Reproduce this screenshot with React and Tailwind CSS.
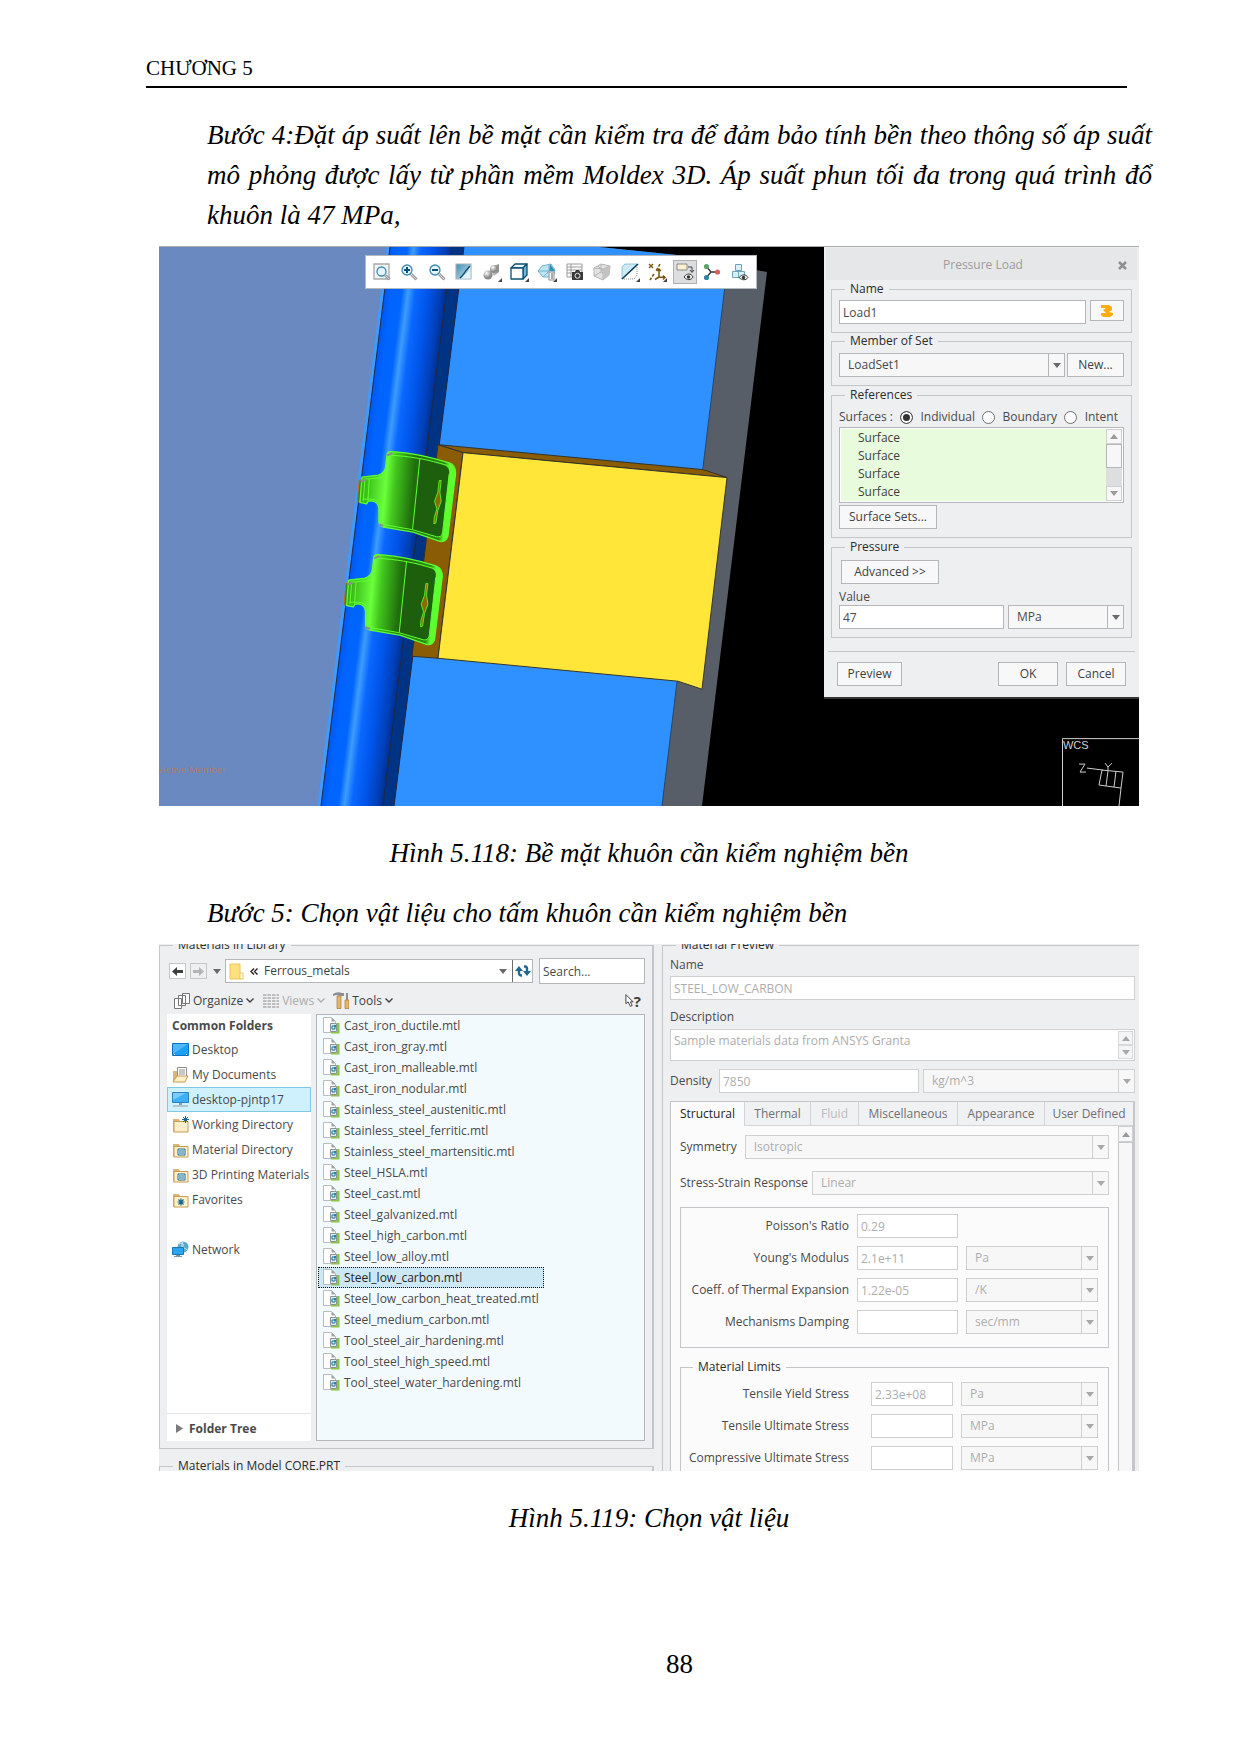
import { useId } from "react";
import clsx from "clsx";

const files = [
  "Cast_iron_ductile.mtl",
  "Cast_iron_gray.mtl",
  "Cast_iron_malleable.mtl",
  "Cast_iron_nodular.mtl",
  "Stainless_steel_austenitic.mtl",
  "Stainless_steel_ferritic.mtl",
  "Stainless_steel_martensitic.mtl",
  "Steel_HSLA.mtl",
  "Steel_cast.mtl",
  "Steel_galvanized.mtl",
  "Steel_high_carbon.mtl",
  "Steel_low_alloy.mtl",
  "Steel_low_carbon.mtl",
  "Steel_low_carbon_heat_treated.mtl",
  "Steel_medium_carbon.mtl",
  "Tool_steel_air_hardening.mtl",
  "Tool_steel_high_speed.mtl",
  "Tool_steel_water_hardening.mtl",
];

/* ---------- toolbar icons, all on an 18px grid ---------- */

function Magnifier({ cx = 7, cy = 7, r = 5 }) {
  return (
    <>
      <path d={`M${cx + 4} ${cy + 4}L16.5 16.5`} stroke="#9a9a9a" strokeWidth="3" />
      <path d={`M${cx + 4} ${cy + 4}L16 16`} stroke="#d8d8d8" strokeWidth="1" />
      <circle cx={cx} cy={cy} r={r} fill="#e4f4fb" stroke="#3d89ad" strokeWidth="1.3" />
    </>
  );
}

const toolIcons = [
  {
    name: "Refit",
    art: (
      <>
        <path d="M1 1h15v15H1z" fill="#f4f4f4" stroke="#a9a9a9" strokeWidth="1.3" />
        <Magnifier cx={8.5} cy={8.5} r={4.5} />
      </>
    ),
  },
  {
    name: "Zoom In",
    art: (
      <>
        <Magnifier />
        <path d="M7 4v6M4 7h6" stroke="#0d4f73" strokeWidth="2" />
      </>
    ),
  },
  {
    name: "Zoom Out",
    art: (
      <>
        <Magnifier />
        <path d="M4 7h6" stroke="#0d4f73" strokeWidth="2" />
      </>
    ),
  },
  {
    name: "Repaint",
    art: (
      <>
        <path d="M1 1h15v15H1z" fill="url(#repaint)" stroke="#a9b4b9" strokeWidth="1.2" />
        <path d="M15.500 2v13.500H5c2-1 3-2 3-4 3 1 6-4 7.500-9.500z" fill="#e3f3f9" />
        <path d="M15 3c-3 3-6 7-7 9l-3 3" stroke="#0d4f73" strokeWidth="1.4" fill="none" />
      </>
    ),
  },
  {
    name: "Shading",
    menu: true,
    art: (
      <>
        <path d="M7 4l9-3v8l-5 4-4-4z" fill="url(#steel)" />
        <circle cx="11" cy="6" r="4" fill="url(#ball)" />
        <circle cx="5" cy="12" r="4.5" fill="url(#ball)" />
      </>
    ),
  },
  {
    name: "Saved Orientations",
    menu: true,
    art: (
      <g stroke="#0d4f73" strokeWidth="1.3" strokeLinejoin="round">
        <path d="M1 5l4-4h12l-4 4z" fill="#e9f7fc" />
        <path d="M13 5l4-4v11l-4 4z" fill="#6db9d8" />
        <path d="M1 5h12v11H1z" fill="#fff" />
      </g>
    ),
  },
  {
    name: "View Manager",
    menu: true,
    art: (
      <>
        <path d="M4 3l9-2 4 6-2 7H5L0 8z" fill="#bfe5f3" stroke="#6db2cf" />
        <path d="M12 1l5 7h-6z" fill="#338fba" />
        <path d="M0 8h11V1M5 14l6-6" stroke="#6db2cf" fill="none" />
        <path d="M11 9h5v8h-5z" fill="#fff" stroke="#8a8a8a" />
        <path d="M13 11h2M13 13h2M13 15h2" stroke="#555" />
      </>
    ),
  },
  {
    name: "Capture",
    art: (
      <>
        <path d="M1 1h15v13H1zM1 4h15M1 7h15M1 10h15M5 1v13" fill="#fff" stroke="#9b9b9b" />
        <path d="M6 9h3l1-2h3l1 2h3v8H6z" fill="#3a3a3a" />
        <circle cx="11.500" cy="12.800" r="2.500" fill="#3a3a3a" stroke="#e8e8e8" />
      </>
    ),
  },
  {
    name: "Perspective",
    art: (
      <>
        <path d="M1 5l7-4 9 2-1 9-6 5-9-4z" fill="#e2e2e2" stroke="#b4b4b4" />
        <path d="M1 5l9 1 7-3M10 6v11M5 3l9 9M1 13l7-4 8 3M8 1v8" stroke="#b4b4b4" fill="none" />
        <path d="M10 6l7-3-1 9-6 5z" fill="#c3c3c3" />
      </>
    ),
  },
  {
    name: "Section",
    menu: true,
    art: (
      <>
        <path d="M1 4l3-3h12L1 16z" fill="#cfeaf4" stroke="#79b7cf" strokeWidth="0.800" />
        <path d="M3 16h10l3-4V3" stroke="#8c8c8c" strokeDasharray="1 1" fill="none" />
        <path d="M1 16L17 1" stroke="#0d3f5e" strokeWidth="1.600" />
      </>
    ),
  },
  {
    name: "Datum Display",
    menu: true,
    art: (
      <g stroke="#7a5410" fill="none">
        <path d="M1 1l4 4M5 1L1 5" strokeWidth="1.3" />
        <path d="M12 1l-4 7M6 11l-4 6" strokeWidth="1.5" strokeDasharray="3 1.500" />
        <path d="M11 6v8l6 .5M11 14l-4 2.500M9 8l2-2 2 2M15 12.500l2 2-2 2" strokeWidth="1.500" />
      </g>
    ),
  },
  {
    name: "Annotation Display",
    pressed: true,
    art: (
      <>
        <path d="M1 1h10v6H1z" fill="#fdf0cf" stroke="#8a8a8a" />
        <path d="M12 4h4v5M14 7l2 2.500L18 7" stroke="#444" fill="none" />
        <path d="M8 14c3-4 7-4 9 0-2 3.500-6 3.500-9 0z" fill="#fff" stroke="#333" />
        <circle cx="12.500" cy="14" r="1.800" fill="#333" />
      </>
    ),
  },
  {
    name: "Spin Center",
    art: (
      <>
        <path d="M3 3l5 6M3 15l5-6M8 9h6" stroke="#333" strokeWidth="1.300" />
        <circle cx="3.500" cy="3.500" r="2.600" fill="#5aa56a" />
        <circle cx="3.500" cy="14.500" r="2.600" fill="#3583a8" />
        <circle cx="14.500" cy="9" r="2.600" fill="#d9615b" />
      </>
    ),
  },
  {
    name: "Simulate",
    art: (
      <>
        <g fill="#d9f0f8" stroke="#6aa5bd">
          <path d="M4.500 1.500h6v6h-6z" />
          <path d="M1.500 8.500h6v6h-6z" />
          <path d="M7.500 8.500h6v6h-6z" />
        </g>
        <path d="M8 14.500c3-3.500 7-3.500 9 0-2 3-6 3-9 0z" fill="#fff" stroke="#333" />
        <circle cx="12.500" cy="14.500" r="1.700" fill="#333" />
      </>
    ),
  },
];

function ViewToolbar() {
  return (
    <div className="absolute top-2 left-[21%] flex h-[34px] w-[40%] items-center justify-between border border-[#b5b9bd] bg-white px-1">
      {toolIcons.map((icon) => (
        <button
          key={icon.name}
          type="button"
          aria-label={icon.name}
          className={clsx(
            "flex size-6 items-center justify-center border",
            icon.pressed ? "border-[#adb0b3] bg-[#dcdee0]" : "border-transparent",
          )}
        >
          <svg viewBox="0 0 18 18" className="size-[18px] shrink-0 overflow-visible" fill="none">
            {icon.art}
            {icon.menu && <path d="M19 15v4h-4z" fill="#444" />}
          </svg>
        </button>
      ))}
    </div>
  );
}

/* ---------- 3D scene ---------- */

function Clip() {
  return (
    <g strokeLinejoin="round">
      <path d="M178 148L172 213 183 216 186 150z" fill="#2c8a10" stroke="#c06a20" strokeWidth="3" />
      <path
        d="M262 68Q268 60 280 63C330 67 390 78 448 97Q468 104 467 130L444 318Q438 336 420 333L340 305 250 290Q235 285 237 265V235Q236 214 215 211L205 212 200 220 180 216 186 140 235 134Q256 128 258 104z"
        fill="url(#clip)"
        stroke="#5dff2f"
        strokeWidth="4"
      />
      <path d="M360 84L436 106Q450 111 448 130L428 308Q424 322 410 319L338 298z" fill="#1d5f0c" />
      <path
        d="M268 74C330 76 390 88 440 104Q456 110 454 132L432 316M360 84L338 298M448 130L428 308Q424 322 410 319L338 298 250 282Q243 276 245 262V232Q240 206 212 206H188M190 146L240 142Q266 134 266 104L268 74M208 146L204 210M195 146L190 212"
        fill="none"
        stroke="#5dff2f"
        strokeWidth="3"
      />
      <path d="M418 150L414 185 404 212 411 235 403 262 402 280 408 278 414 240 424 212 420 185 424 150z" fill="#8a6a08" stroke="#5dff2f" strokeWidth="2.500" />
      <path d="M262 74l16-6M182 152l16-4M238 282l12 4" stroke="#8a8f8a" strokeWidth="6" />
    </g>
  );
}

function Scene() {
  return (
    <svg viewBox="0 0 980 560" preserveAspectRatio="none" className="absolute inset-0 size-full" aria-hidden="true">
      <defs>
        <linearGradient id="rod" gradientUnits="userSpaceOnUse" x1="231" y1="0" x2="293" y2="0" gradientTransform="skewX(-7.050)">
          <stop offset="0" stopColor="#0058f0" />
          <stop offset="0.120" stopColor="#0064ff" />
          <stop offset="0.280" stopColor="#0066ff" />
          <stop offset="0.380" stopColor="#3f9cff" />
          <stop offset="0.500" stopColor="#0a68ff" />
          <stop offset="0.700" stopColor="#0055ea" />
          <stop offset="0.900" stopColor="#003fb8" />
          <stop offset="1" stopColor="#00308c" />
        </linearGradient>
        <linearGradient id="clip" gradientUnits="userSpaceOnUse" x1="180" y1="0" x2="470" y2="24">
          <stop offset="0" stopColor="#2c9a12" />
          <stop offset="0.150" stopColor="#43c81e" />
          <stop offset="0.310" stopColor="#6bff3c" />
          <stop offset="0.400" stopColor="#43c81e" />
          <stop offset="0.600" stopColor="#1f6d0c" />
          <stop offset="0.900" stopColor="#2c8a10" />
          <stop offset="0.950" stopColor="#5dff2f" />
        </linearGradient>
        <linearGradient id="steel">
          <stop offset="0" stopColor="#e8e8e8" />
          <stop offset="1" stopColor="#8c8c8c" />
        </linearGradient>
        <radialGradient id="ball" cx="0.350" cy="0.300">
          <stop offset="0" stopColor="#fff" />
          <stop offset="1" stopColor="#8c8c8c" />
        </radialGradient>
        <linearGradient id="repaint" x2="1" y2="1">
          <stop offset="0" stopColor="#3f8db3" />
          <stop offset="1" stopColor="#d3ebf4" />
        </linearGradient>
      </defs>
      <rect width="980" height="560" fill="#000" />
      <path d="M0 0H240L165 560H0z" fill="#6989c0" />
      <path d="M440 0L518 8 608 25 543 560H503L565 30z" fill="#585e68" />
      <path d="M305 0H440L518 8 569 14 503 560H235z" fill="#2e91ff" />
      <path d="M569 14L503 560" stroke="#26466e" />
      <path d="M229 0L160 560" stroke="#3f9bff" strokeWidth="3" />
      <path d="M231 0H293L224 560H162z" fill="url(#rod)" />
      <path d="M293 0H305L235 560H224z" fill="#003384" />
      <path d="M231 0L162 560M293 0L224 560M305 0L235 560" stroke="#1d2b4a" />
      <path d="M279 198L544 223 568 231 304 206z" fill="#8a5c06" stroke="#33332b" />
      <path d="M279 198L304 206 279 412 253 410z" fill="#8a5c06" stroke="#33332b" />
      <path d="M304 206L568 231 543 443 519 435 279 412z" fill="#ffe639" stroke="#33332b" />
      <g transform="translate(141 184) scale(0.333)">
        <Clip />
        <g transform="translate(-40 310)">
          <Clip />
        </g>
      </g>
      <text x="0" y="527" fontSize="10" fill="#a8806c" fontFamily="Liberation Sans, sans-serif">
        Active Member
      </text>
      <g stroke="#d0d0d0" fill="none">
        <path d="M903.500 560V492.500H980" />
        <path d="M928 522L944 524M943 524L964 526 962 542 940 539zM949 525l-2 15M957 525l-2 16M962 542l-2 18M920 518h6l-5 8h6M946 517l3 4 4-4M949 521v3" />
      </g>
      <text x="904" y="503" fontSize="11" fill="#d0d0d0" fontFamily="Liberation Sans, sans-serif">
        WCS
      </text>
    </svg>
  );
}

/* ---------- form parts ---------- */

function Caret({ up = false, className }) {
  return (
    <svg viewBox="0 0 8 5" className={clsx("h-[5px] w-2", className)} aria-hidden="true">
      <path d={up ? "M0 5L4 0l4 5z" : "M0 0h8L4 5z"} fill="currentColor" />
    </svg>
  );
}

function Select({ id, label, value, disabled, className }) {
  return (
    <span className={clsx("relative flex h-6", disabled ? "text-[#adadad]" : "text-[#4a4a4a]", className)}>
      <select
        id={id}
        aria-label={label}
        disabled={disabled}
        className={clsx(
          "h-6 w-full appearance-none border bg-[#f7f7f8] pr-5 pl-2 leading-4 opacity-100",
          disabled ? "border-[#cfd0d2]" : "border-[#b4b6b9]",
        )}
      >
        <option>{value}</option>
      </select>
      <span
        className={clsx(
          "pointer-events-none absolute inset-y-0 right-0 flex w-[17px] items-center justify-center border-l",
          disabled ? "border-[#cfd0d2] text-[#a8a8a8]" : "border-[#b4b6b9] text-[#6a6a6a]",
        )}
      >
        <Caret />
      </span>
    </span>
  );
}

function TextBox({ id, label, value, disabled, className }) {
  return (
    <input
      id={id}
      aria-label={label}
      type="text"
      defaultValue={value}
      disabled={disabled}
      className={clsx(
        "h-6 min-w-0 border bg-white px-[3px] leading-4",
        disabled ? "border-[#cfd0d2] text-[#adadad]" : "border-[#b4b6b9] text-[#4a4a4a]",
        className,
      )}
    />
  );
}

function PushButton({ className, children }) {
  return (
    <button type="button" className={clsx("h-6 border border-[#b4b6b9] bg-[#f8f8f9] leading-4 text-[#3f3f3f]", className)}>
      {children}
    </button>
  );
}

function Group({ title, className, children }) {
  return (
    <fieldset className={clsx("min-w-0 border border-[#c4c6c9]", className)}>
      <legend className="ml-[6px] px-[5px] leading-4 text-[#2b2b2b]">{title}</legend>
      {children}
    </fieldset>
  );
}

function PressureDialog() {
  return (
    <section className="relative ml-auto w-[315px] border-b-2 border-[#333] bg-[#eeeff1] px-[7px] pt-px pb-[11px] text-[12px] leading-4">
      <div className="-mx-[5px] mb-px flex h-8 items-center bg-[#e6e7e9] pt-[2px] text-[#9c9c9c]">
        <h2 className="flex-1 pl-7 text-center">Pressure Load</h2>
        <button type="button" aria-label="Close" className="mr-[5px] flex w-5 justify-center">
          <svg viewBox="0 0 9 9" className="size-[9px]">
            <path d="M1 1l7 7M8 1L1 8" stroke="#8f8f8f" strokeWidth="2.500" />
          </svg>
        </button>
      </div>

      <Group title="Name" className="px-[7px] pt-[3px] pb-2">
        <div className="flex items-start gap-1">
          <TextBox label="Name" value="Load1" className="flex-1" />
          <button type="button" aria-label="Color" className="flex h-[21px] w-[34px] items-center justify-center border border-[#b4b6b9] bg-[#f8f8f9]">
            <svg viewBox="0 0 14 14" className="size-[14px]">
              <path d="M1 1h8l3 2v3l-3 2 4 1v2l-3 2H3l-2-2V9h5l-3-3 3-2H1z" fill="#ffad0f" />
            </svg>
          </button>
        </div>
      </Group>

      <Group title="Member of Set" className="px-[7px] pt-1 pb-2">
        <div className="flex gap-[2px]">
          <Select label="Member of Set" value="LoadSet1" className="flex-1" />
          <PushButton className="w-[57px]">New...</PushButton>
        </div>
      </Group>

      <Group title="References" className="mt-px px-[7px] pt-1 pb-2">
        <div className="flex h-5 items-center justify-between pr-[6px] text-[#4a4a4a]">
          <span>Surfaces :</span>
          {["Individual", "Boundary", "Intent"].map((name) => (
            <label key={name} className="flex items-center gap-2">
              <input
                type="radio"
                name="surfaces"
                defaultChecked={name === "Individual"}
                className="size-[13px] appearance-none rounded-full border border-[#6f6f6f] bg-white checked:border-[#555] checked:bg-[#333] checked:shadow-[inset_0_0_0_2px_white]"
              />
              {name}
            </label>
          ))}
        </div>
        <div className="flex h-[76px] border border-[#b4b6b9] bg-white p-px">
          <ul className="flex-1 bg-[#e8fbdc] pl-[17px] leading-[18px] text-[#3f3f3f]">
            <li>Surface</li>
            <li>Surface</li>
            <li>Surface</li>
            <li>Surface</li>
          </ul>
          <div className="flex w-4 flex-col bg-[#dcdee0] text-[#9a9a9a]">
            <span className="flex h-[15px] items-center justify-center border border-[#cfd0d2] bg-[#f7f7f8]">
              <Caret up />
            </span>
            <span className="h-6 border border-[#b4b6b9] bg-[#f7f7f8]" />
            <span className="mt-auto flex h-[15px] items-center justify-center border border-[#cfd0d2] bg-[#f7f7f8]">
              <Caret />
            </span>
          </div>
        </div>
        <PushButton className="mt-[2px] block w-[98px]">Surface Sets...</PushButton>
      </Group>

      <Group title="Pressure" className="mt-px px-[7px] pt-[5px] pb-2">
        <PushButton className="ml-[2px] block w-[98px]">Advanced &gt;&gt;</PushButton>
        <label htmlFor="pressure-value" className="block h-[21px] pt-[5px] text-[#4a4a4a]">
          Value
        </label>
        <div className="flex gap-1">
          <TextBox id="pressure-value" value="47" className="flex-1" />
          <Select label="Unit" value="MPa" className="w-[116px]" />
        </div>
      </Group>

      <hr className="-mx-[3px] mt-[13px] border-[#c4c6c9]" />
      <div className="mt-[10px] flex gap-2 px-[6px]">
        <PushButton className="mr-auto w-[65px]">Preview</PushButton>
        <PushButton className="w-[60px]">OK</PushButton>
        <PushButton className="w-[60px]">Cancel</PushButton>
      </div>
    </section>
  );
}

/* ---------- materials browser ---------- */

function FileIcon() {
  return (
    <svg viewBox="0 0 17 17" className="size-[17px] shrink-0" aria-hidden="true">
      <path d="M.5.5h8l4 4v11H.5z" fill="#fff" stroke="#b9bcbe" />
      <path d="M8.500.5v4h4z" fill="#9da1a4" />
      <path d="M14 6h2.500v10.500H8V15h6z" fill="#8cc63f" />
      <path d="M7.500 6.500h6v8h-6z" fill="#e4eaec" stroke="#8b9194" />
      <path d="M9 9h3v3H9z" fill="#e4f4fa" stroke="#1c6f98" />
      <path d="M11 8h2v2h-2z" fill="#1c86b8" />
    </svg>
  );
}

function FolderShape({ children }) {
  return (
    <>
      <path d="M1 3h6l1 2h8v11H1z" fill="#dcb676" />
      <path d="M2 5.500h14V16H2z" fill="#fff0cc" stroke="#c79a53" />
      {children}
    </>
  );
}

const places = [
  {
    name: "Desktop",
    art: (
      <>
        <path d="M.5 2.500h16v12H.5z" fill="#1ba0f5" stroke="#0b70c4" />
        <path d="M1 3h15L1 13z" fill="#4db8fa" />
        <path d="M2 13.500h1M14 13.500h1" stroke="#fff" />
      </>
    ),
  },
  {
    name: "My Documents",
    art: (
      <>
        <path d="M1 5h4v11H1z" fill="#dcb676" />
        <path d="M5.500 1.500h9v11h-9z" fill="#fff" stroke="#8f8f8f" />
        <path d="M7 4h6M7 6h6M7 8h6" stroke="#8f8f8f" />
        <path d="M1 16l4-6h11l-3 6z" fill="#fff0cc" stroke="#c79a53" />
      </>
    ),
  },
  {
    name: "desktop-pjntp17",
    selected: true,
    art: (
      <>
        <path d="M.5 1.500h16v10H.5z" fill="#3cb0f2" stroke="#2a83bd" />
        <path d="M1 2h13L1 9z" fill="#78cdfa" />
        <path d="M7 12h3v2H7zM1 14.500h15v1H1z" fill="#8fa0aa" />
      </>
    ),
  },
  {
    name: "Working Directory",
    art: (
      <FolderShape>
        <path d="M13.500 0v7M10 3.500h7M11 1l5 5M16 1l-5 5" stroke="#14688f" />
      </FolderShape>
    ),
  },
  {
    name: "Material Directory",
    art: (
      <FolderShape>
        <path d="M6 8h7v6H6z" fill="#fff" stroke="#14688f" />
        <path d="M7 10h5M7 12h5" stroke="#14688f" />
      </FolderShape>
    ),
  },
  {
    name: "3D Printing Materials",
    art: (
      <FolderShape>
        <path d="M6 8h7v6H6z" fill="#fff" stroke="#14688f" />
        <path d="M7 10h5M7 12h5" stroke="#14688f" />
      </FolderShape>
    ),
  },
  {
    name: "Favorites",
    art: (
      <FolderShape>
        <path d="M9 7.500v7M5.500 11h7M6.500 8.500l5 5M11.500 8.500l-5 5" stroke="#14688f" strokeWidth="1.200" />
      </FolderShape>
    ),
  },
  {
    name: "Network",
    spaced: true,
    art: (
      <>
        <circle cx="11" cy="6" r="5.500" fill="#5aa9c9" />
        <path d="M7 3c3-2 5 0 4 2s3 2 4 4M11 1c-2 3-1 6 1 9" stroke="#d5edf5" fill="none" />
        <path d="M.5 6.500h11v7H.5z" fill="#2ba5f0" stroke="#1879b8" />
        <path d="M4 14h4v1h2v1H2v-1h2z" fill="#7e98a5" />
      </>
    ),
  },
];

function Chevron() {
  return (
    <svg viewBox="0 0 8 5" className="h-[5px] w-2" aria-hidden="true">
      <path d="M.5.5L4 4 7.500.5" fill="none" stroke="currentColor" strokeWidth="1.400" />
    </svg>
  );
}

function NavArrow({ back, className }) {
  return (
    <button
      type="button"
      aria-label={back ? "Back" : "Forward"}
      className={clsx("flex h-4 w-[17px] items-center justify-center border border-[#c4c6c9]", className)}
    >
      <svg viewBox="0 0 11 9" className="h-[9px] w-[11px]">
        <path d={back ? "M0 4.500L5 0v3h6v3H5v3z" : "M11 4.500L6 0v3H0v3h6v3z"} fill="currentColor" />
      </svg>
    </button>
  );
}

function LibraryPanel() {
  return (
    <Group title="Materials in Library" className="h-[512px] border-r-2 pt-[6px] pr-[7px] pl-[7px]">
      <div className="flex h-6 items-center">
        <NavArrow back className="ml-[2px] bg-white text-[#3f3f3f]" />
        <NavArrow className="ml-1 text-[#b4b4b4]" />
        <Caret className="ml-[6px] text-[#6a6a6a]" />
        <div className="ml-1 flex h-6 min-w-0 flex-1 items-center border border-[#b4b6b9] bg-white">
          <svg viewBox="0 0 15 17" className="ml-[3px] h-[17px] w-[15px]" aria-hidden="true">
            <path d="M1 1h10v15H1z" fill="#ffe07e" />
            <path d="M1 1h10v15H1zM11 10h3v6h-3" fill="none" stroke="#eac558" />
          </svg>
          <svg viewBox="0 0 8 7" className="ml-[6px] h-[7px] w-2" aria-hidden="true">
            <path d="M4 .5L1 3.500l3 3M7.500.5l-3 3 3 3" fill="none" stroke="#222" strokeWidth="1.400" />
          </svg>
          <span className="ml-[6px] flex-1 text-[#3f3f3f]">Ferrous_metals</span>
          <Caret className="mr-[5px] text-[#6a6a6a]" />
          <button type="button" aria-label="Refresh" className="flex h-full w-5 items-center justify-center border-l border-[#6a6a6a]">
            <svg viewBox="0 0 16 14" className="h-[14px] w-4">
              <path d="M7 11.500H6Q4 11.500 4 9V6M9 2.500h1q2 0 2 2.500v3" fill="none" stroke="#1c6a94" strokeWidth="2.400" />
              <path d="M0 7l4-5 4 5zM8 7l4 5 4-5z" fill="#1c6a94" />
            </svg>
          </button>
        </div>
        <input
          type="search"
          aria-label="Search"
          placeholder="Search..."
          className="ml-[6px] h-[26px] w-[106px] border border-[#b4b6b9] bg-white px-[3px] leading-4 placeholder:text-[#4a4a4a]"
        />
      </div>

      <div className="flex h-[31px] items-center pt-1 pl-[7px] text-[#3f3f3f]">
        <button type="button" className="flex items-center gap-[3px]">
          <svg viewBox="0 0 16 17" className="h-[17px] w-4" aria-hidden="true">
            <path d="M8.500 1.500h7v10h-7zM4.500 3.500h7v10h-7zM.5 6.500h7v10h-7z" fill="#fff" stroke="#777" />
          </svg>
          Organize <Chevron />
        </button>
        <button type="button" className="ml-[9px] flex items-center gap-[3px] text-[#adadad]">
          <svg viewBox="0 0 16 16" className="size-4" aria-hidden="true">
            <path d="M0 2h16M0 5h16M0 8h16M0 11h16M0 14h16" stroke="#adadad" strokeDasharray="3.500 1" strokeWidth="1.500" />
          </svg>
          Views <Chevron />
        </button>
        <button type="button" className="ml-2 flex items-center gap-[3px]">
          <svg viewBox="0 0 16 17" className="h-[17px] w-4" aria-hidden="true">
            <path d="M0 2q4-3 9-1h2v3H8L3 3 0 4z" fill="#8a8f94" />
            <path d="M4 4h4v12.500H4z" fill="#e5b66a" stroke="#a97a35" strokeWidth="0.700" />
            <path d="M13 1h2v7h-2z" fill="#8a8f94" />
            <path d="M12 8h4v8.500h-4z" fill="#e5b66a" stroke="#a97a35" strokeWidth="0.700" />
          </svg>
          Tools <Chevron />
        </button>
        <button type="button" aria-label="Context help" className="mr-1 ml-auto flex items-center">
          <svg viewBox="0 0 10 15" className="h-[15px] w-[9px]">
            <path d="M1 1v10l2.500-2L6 14l2-1-2-4h3z" fill="#fff" stroke="#333" />
          </svg>
          <span className="text-[15px] leading-4 font-bold">?</span>
        </button>
      </div>

      <div className="flex h-[427px] gap-[5px]">
        <nav className="flex w-36 flex-col bg-white text-[#4a4a4a]">
          <h3 className="h-[23px] pt-1 pl-[5px] font-bold">Common Folders</h3>
          {places.map((place) => (
            <a
              key={place.name}
              href="#"
              className={clsx(
                "flex h-[25px] items-center gap-[3px] border pl-1 whitespace-nowrap",
                place.selected ? "border-[#7fc8e6] bg-[#cff0fd]" : "border-transparent",
                place.spaced && "mt-[25px]",
              )}
            >
              <svg viewBox="0 0 17 17" className="size-[17px] shrink-0" fill="none" aria-hidden="true">
                {place.art}
              </svg>
              {place.name}
            </a>
          ))}
          <button type="button" className="mt-auto flex h-7 items-center gap-[6px] border-t border-[#e4e5e6] pt-[2px] pl-[9px] font-bold">
            <svg viewBox="0 0 7 9" className="h-[9px] w-[7px]" aria-hidden="true">
              <path d="M0 0l7 4.500L0 9z" fill="#7a7a7a" />
            </svg>
            Folder Tree
          </button>
        </nav>
        <ul className="flex-1 border border-[#b4b6b9] bg-[#f3fafd] pl-px text-[#4a4a4a]">
          {files.map((file) => (
            <li
              key={file}
              className={clsx(
                "flex h-[21px] w-[226px] items-center gap-1 border border-dotted pl-1",
                file === "Steel_low_carbon.mtl" ? "border-[#111] bg-[#cce8f5] text-[#1f1f1f]" : "border-transparent",
              )}
            >
              <FileIcon />
              {file}
            </li>
          ))}
        </ul>
      </div>
    </Group>
  );
}

function Property({ name, value, unit, narrow }) {
  const id = useId();
  return (
    <div className="flex items-center">
      <label htmlFor={id} className="flex-1 text-right">
        {name}
      </label>
      <TextBox id={id} value={value} disabled className={narrow ? "ml-[22px] w-[82px]" : "ml-2 w-[101px]"} />
      {unit ? (
        <Select label={name + " unit"} value={unit} disabled className={narrow ? "ml-2 w-[137px]" : "ml-2 w-[132px]"} />
      ) : (
        <span className="ml-2 w-[132px]" />
      )}
    </div>
  );
}

const tabs = [
  ["Structural", "w-[74px]"],
  ["Thermal", "w-[66px]"],
  ["Fluid", "w-12"],
  ["Miscellaneous", "w-[99px]"],
  ["Appearance", "w-[87px]"],
  ["User Defined", "flex-1"],
];

function PreviewPanel() {
  return (
    <Group title="Material Preview" className="min-w-0 flex-1 border-r-0 pr-1 pl-[7px]">
      <div className="text-[#4a4a4a]">
        <label htmlFor="material-name" className="block h-[23px] pt-1">
          Name
        </label>
        <TextBox id="material-name" value="STEEL_LOW_CARBON" disabled className="block w-full" />
        <label htmlFor="material-description" className="block h-[29px] pt-[9px]">
          Description
        </label>
        <div className="relative">
          <textarea
            id="material-description"
            defaultValue="Sample materials data from ANSYS Granta"
            disabled
            className="block h-8 w-full resize-none overflow-hidden border border-[#cfd0d2] bg-white px-[3px] pt-[3px] leading-4 text-[#adadad]"
          />
          <div className="absolute inset-y-[2px] right-[2px] flex w-[15px] flex-col text-[#a8a8a8]">
            <span className="flex flex-1 items-center justify-center border border-[#d6d8da] bg-[#f4f5f6]">
              <Caret up />
            </span>
            <span className="flex flex-1 items-center justify-center border border-[#d6d8da] bg-[#f4f5f6]">
              <Caret />
            </span>
          </div>
        </div>
        <div className="mt-2 flex items-center">
          <label htmlFor="density" className="w-[49px]">
            Density
          </label>
          <TextBox id="density" value="7850" disabled className="w-[200px]" />
          <Select label="Density unit" value="kg/m^3" disabled className="ml-1 flex-1" />
        </div>

        <div className="mt-2 border border-r-2 border-[#c4c6c9] bg-[#fbfbfb]">
          <div role="tablist" className="flex h-6">
            {tabs.map(([name, width], i) => (
              <button
                key={name}
                type="button"
                role="tab"
                aria-selected={i === 0}
                className={clsx(
                  "border-r border-[#d2d4d6] whitespace-nowrap last:border-r-0",
                  width,
                  i === 0 ? "text-[#1f1f1f]" : "border-b bg-[#f0f1f3]",
                  name === "Fluid" ? "text-[#bcbcbc]" : i > 0 && "text-[#6f7073]",
                )}
              >
                {name}
              </button>
            ))}
          </div>
          <div className="flex">
            <div className="min-w-0 flex-1 px-[9px] pt-[9px]">
              <div className="flex items-center gap-2">
                <label htmlFor="symmetry">Symmetry</label>
                <Select id="symmetry" value="Isotropic" disabled className="flex-1" />
              </div>
              <div className="mt-3 flex items-center gap-1">
                <label htmlFor="response">Stress-Strain Response</label>
                <Select id="response" value="Linear" disabled className="flex-1" />
              </div>
              <div className="mt-3 flex h-[141px] flex-col gap-2 border border-[#c4c6c9] pt-[6px] pr-[10px]">
                <Property name="Poisson's Ratio" value="0.29" />
                <Property name="Young's Modulus" value="2.1e+11" unit="Pa" />
                <Property name="Coeff. of Thermal Expansion" value="1.22e-05" unit="/K" />
                <Property name="Mechanisms Damping" value="" unit="sec/mm" />
              </div>
              <Group title="Material Limits" className="mt-[11px] pt-[7px] pr-[10px] pb-8 pl-[6px]">
                <div className="flex flex-col gap-2">
                  <Property narrow name="Tensile Yield Stress" value="2.33e+08" unit="Pa" />
                  <Property narrow name="Tensile Ultimate Stress" value="" unit="MPa" />
                  <Property narrow name="Compressive Ultimate Stress" value="" unit="MPa" />
                </div>
              </Group>
            </div>
            <div className="flex w-[15px] flex-col bg-[#f7f7f8] text-[#9a9a9a]">
              <span className="flex h-4 items-center justify-center border border-[#cfd0d2]">
                <Caret up />
              </span>
              <span className="flex-1 border border-[#c4c6c9]" />
            </div>
          </div>
        </div>
      </div>
    </Group>
  );
}

function Caption({ children }) {
  return <figcaption className="mt-[27px] text-center text-[27px] leading-10 italic">{children}</figcaption>;
}

export default function App() {
  return (
    <div className="min-h-screen bg-white pr-[88px] pl-[146px] font-['Liberation_Serif',serif] text-black">
      <header className="mr-[25px] border-b-2 border-black pt-14 pb-[6px] text-[21px] leading-6">CHƯƠNG 5</header>

      <main>
        <p className="mt-[27px] pl-[61px] text-[27px] leading-10 italic">
          <span className="block whitespace-nowrap [text-align-last:justify]">
            Bước 4:Đặt áp suất lên bề mặt cần kiểm tra để đảm bảo tính bền theo thông số áp suất
          </span>{" "}
          <span className="block whitespace-nowrap [text-align-last:justify]">
            mô phỏng được lấy từ phần mềm Moldex 3D. Áp suất phun tối đa trong quá trình đổ
          </span>{" "}
          khuôn là 47 MPa,
        </p>

        <figure className="mt-[11px]">
          <div className="relative mx-[13px] flex aspect-[7/4] items-start overflow-hidden border-t border-[#a9abad] font-['Open_Sans',sans-serif]">
            <Scene />
            <ViewToolbar />
            <PressureDialog />
          </div>
          <Caption>Hình 5.118: Bề mặt khuôn cần kiểm nghiệm bền</Caption>
        </figure>

        <p className="mt-5 pl-[61px] text-[27px] leading-10 italic">
          Bước 5: Chọn vật liệu cho tấm khuôn cần kiểm nghiệm bền
        </p>

        <figure className="mt-[11px]">
          <div className="mx-[13px] h-[527px] overflow-hidden bg-[#eeeff1] font-['Open_Sans',sans-serif] text-[12px] leading-4">
            <div className="-mt-[7px] flex gap-2">
              <div className="w-[495px] shrink-0">
                <LibraryPanel />
                <Group title="Materials in Model CORE.PRT" className="mt-[9px] h-10 border-r-2 pl-[7px]" />
              </div>
              <PreviewPanel />
            </div>
          </div>
          <Caption>Hình 5.119: Chọn vật liệu</Caption>
        </figure>
      </main>

      <footer className="mt-[106px] pb-[60px] pl-[61px] text-center text-[27px] leading-10">88</footer>
    </div>
  );
}
